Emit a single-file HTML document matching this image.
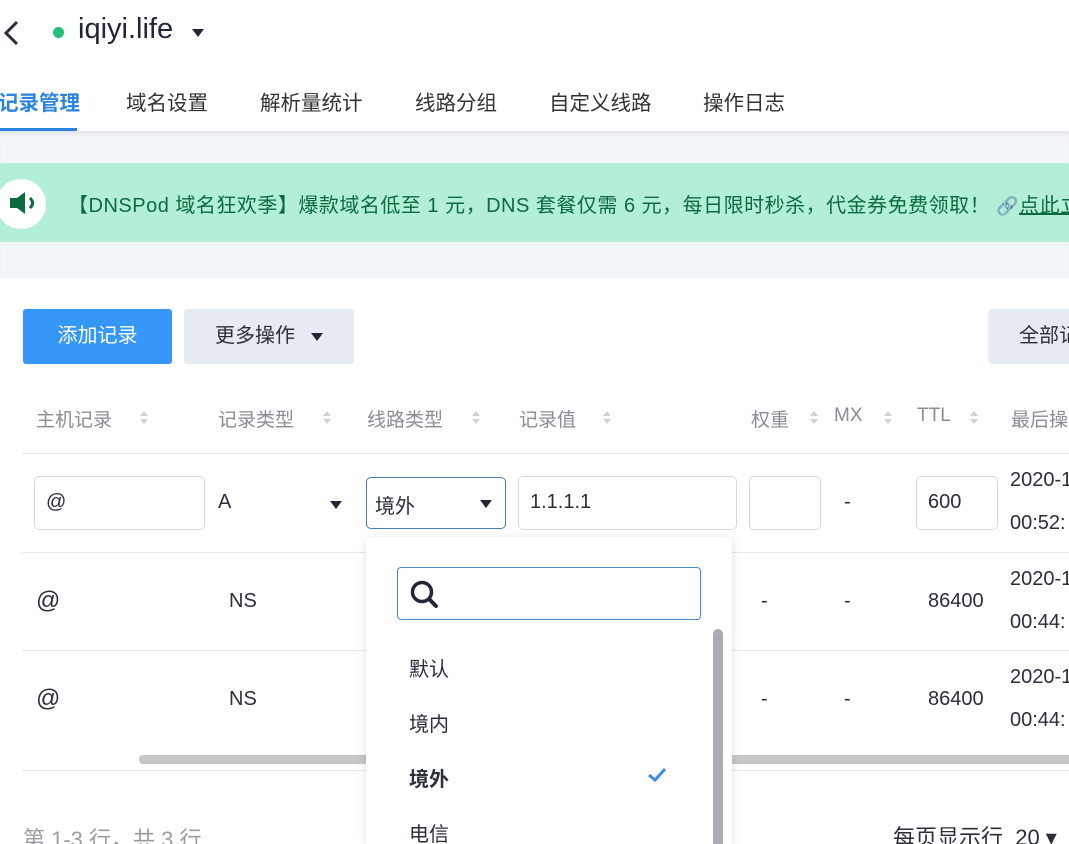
<!DOCTYPE html>
<html><head><meta charset="utf-8"><style>
*{margin:0;padding:0;box-sizing:border-box}
html,body{width:1069px;height:844px;overflow:hidden}
body{background:#fff;position:relative;font-family:"Liberation Sans","Noto Sans CJK SC",sans-serif;color:#2b2f3a}
.a{position:absolute;white-space:nowrap}
.tab{position:absolute;top:86px;font-size:20.5px;color:#333;white-space:nowrap}
.th{position:absolute;top:405px;font-size:19px;color:#8a8d94;white-space:nowrap}
.sort{position:absolute;top:410px;width:8px;height:16px}
.sort:before,.sort:after{content:"";position:absolute;left:0;border-left:4px solid transparent;border-right:4px solid transparent}
.sort:before{top:1px;border-bottom:5px solid #cfd2d8}
.sort:after{top:9px;border-top:5px solid #cfd2d8}
.inp{position:absolute;border:1px solid #d6d9de;border-radius:5px;background:#fff}
.td{position:absolute;font-size:20px;color:#2b2f3a;white-space:nowrap}
.line{position:absolute;left:22px;right:0;height:1px;background:#e6e8eb}
.tri{position:absolute;width:0;height:0;border-left:6px solid transparent;border-right:6px solid transparent;border-top:8px solid #222636}
</style></head><body>
<svg class="a" style="left:0;top:18px" width="24" height="30"><path d="M17 4 L6 15 L17 26" stroke="#2b2f3a" stroke-width="3" fill="none"/></svg>
<div class="a" style="left:53px;top:27px;width:11px;height:11px;border-radius:50%;background:#21c17a"></div>
<div class="a" style="left:78px;top:13px;font-size:29px;color:#222636">iqiyi.life</div>
<div class="tri" style="left:192px;top:29px"></div>
<div class="tab" style="left:-2px;color:#2d84e0;font-weight:bold">记录管理</div>
<div class="a" style="left:0;top:128px;width:77px;height:3px;background:#2d84e0"></div>
<div class="tab" style="left:126px">域名设置</div>
<div class="tab" style="left:260px">解析量统计</div>
<div class="tab" style="left:415px">线路分组</div>
<div class="tab" style="left:549px">自定义线路</div>
<div class="tab" style="left:703px">操作日志</div>
<div class="a" style="left:0;top:131px;width:1069px;height:147px;background:#f3f6f9;box-shadow:inset 0 4px 4px -2px #dcdfe3"></div>
<div class="a" style="left:0;top:163px;width:1069px;height:79px;background:#b3eed6"></div>
<div class="a" style="left:-4px;top:179px;width:50px;height:50px;border-radius:50%;background:#fff"></div>
<svg class="a" style="left:8px;top:190px" width="32" height="26"><path d="M2 8 H9 L17 2 V24 L9 18 H2 Z" fill="#0b6b3f"/><path d="M22 8 Q27 13 22 18" stroke="#0b6b3f" stroke-width="3" fill="none"/></svg>
<div class="a" style="left:68px;top:189px;font-size:20px;letter-spacing:0.5px;color:#0b6b3f">【DNSPod 域名狂欢季】爆款域名低至 1 元，DNS 套餐仅需 6 元，每日限时秒杀，代金券免费领取！ <span style="font-size:18px">🔗</span><span style="text-decoration:underline">点此立即</span></div>
<div class="a" style="left:23px;top:309px;width:149px;height:55px;background:#3597f7;border-radius:3px;color:#fff;font-size:20px;text-align:center;line-height:55px">添加记录</div>
<div class="a" style="left:184px;top:309px;width:170px;height:55px;background:#e6ebf3;border-radius:3px;font-size:20px;line-height:55px;padding-left:31px;color:#2b2f3a">更多操作</div>
<div class="tri" style="left:311px;top:333px"></div>
<div class="a" style="left:988px;top:309px;width:100px;height:55px;background:#e6ebf3;border-radius:4px;font-size:20px;line-height:55px;padding-left:31px">全部记录</div>
<div class="th" style="left:36px">主机记录</div><div class="sort" style="left:140px"></div>
<div class="th" style="left:218px">记录类型</div><div class="sort" style="left:323px"></div>
<div class="th" style="left:367px">线路类型</div><div class="sort" style="left:472px"></div>
<div class="th" style="left:519px">记录值</div><div class="sort" style="left:603px"></div>
<div class="th" style="left:751px">权重</div><div class="sort" style="left:810px"></div>
<div class="th" style="left:834px">MX</div><div class="sort" style="left:884px"></div>
<div class="th" style="left:917px">TTL</div><div class="sort" style="left:970px"></div>
<div class="th" style="left:1011px">最后操作</div>
<div class="line" style="top:453px"></div>
<div class="inp" style="left:34px;top:476px;width:171px;height:54px"></div>
<div class="td" style="left:46px;top:491px">@</div>
<div class="td" style="left:218px;top:491px">A</div>
<div class="tri" style="left:330px;top:501px"></div>
<div class="inp" style="left:366px;top:477px;width:140px;height:52px;border-color:#4a7fb5"></div>
<div class="td" style="left:375px;top:490px">境外</div>
<div class="tri" style="left:480px;top:500px"></div>
<div class="inp" style="left:518px;top:476px;width:219px;height:54px"></div>
<div class="td" style="left:530px;top:491px">1.1.1.1</div>
<div class="inp" style="left:749px;top:476px;width:72px;height:54px"></div>
<div class="td" style="left:844px;top:491px">-</div>
<div class="inp" style="left:916px;top:476px;width:82px;height:54px"></div>
<div class="td" style="left:928px;top:491px">600</div>
<div class="td" style="left:1010px;top:469px">2020-1</div>
<div class="td" style="left:1010px;top:512px">00:52:</div>
<div class="line" style="top:552px"></div>
<div class="td" style="left:36px;top:587px;font-size:24px">@</div>
<div class="td" style="left:229px;top:590px">NS</div>
<div class="td" style="left:761px;top:590px">-</div>
<div class="td" style="left:844px;top:590px">-</div>
<div class="td" style="left:928px;top:590px">86400</div>
<div class="td" style="left:1010px;top:568px">2020-1</div>
<div class="td" style="left:1010px;top:611px">00:44:</div>
<div class="line" style="top:650px"></div>
<div class="td" style="left:36px;top:685px;font-size:24px">@</div>
<div class="td" style="left:229px;top:688px">NS</div>
<div class="td" style="left:761px;top:688px">-</div>
<div class="td" style="left:844px;top:688px">-</div>
<div class="td" style="left:928px;top:688px">86400</div>
<div class="td" style="left:1010px;top:666px">2020-1</div>
<div class="td" style="left:1010px;top:709px">00:44:</div>
<div class="a" style="left:139px;top:755px;width:940px;height:9px;border-radius:4px;background:#c6c7c9"></div>
<div class="line" style="top:770px"></div>
<div class="a" style="left:23px;top:822px;font-size:22px;color:#9a9da3">第 1-3 行，共 3 行</div>
<div class="a" style="left:893px;top:820px;font-size:22px;color:#2b2f3a">每页显示行&nbsp; 20 ▾</div>
<div class="a" style="left:366px;top:537px;width:366px;height:307px;background:#fff;border-radius:4px 4px 0 0;box-shadow:0 2px 10px rgba(0,0,0,.12);overflow:hidden">
<div class="a" style="left:31px;top:30px;width:304px;height:53px;border:1px solid #4a8ad0;border-radius:4px"></div>
<svg class="a" style="left:43px;top:42px" width="32" height="32"><circle cx="13" cy="13" r="9.5" stroke="#222636" stroke-width="3.5" fill="none"/><path d="M20 20 L27 27" stroke="#222636" stroke-width="4" stroke-linecap="round"/></svg>
<div class="a" style="left:43px;top:116px;font-size:20px">默认</div>
<div class="a" style="left:43px;top:171px;font-size:20px">境内</div>
<div class="a" style="left:43px;top:226px;font-size:20px;font-weight:bold">境外</div>
<svg class="a" style="left:281px;top:230px" width="20" height="16"><path d="M2 8 L8 13 L18 2" stroke="#3d8ee0" stroke-width="3" fill="none"/></svg>
<div class="a" style="left:43px;top:281px;font-size:20px">电信</div>
<div class="a" style="left:347px;top:92px;width:10px;height:240px;border-radius:5px;background:#a9acb2"></div>
</div>
</body></html>
